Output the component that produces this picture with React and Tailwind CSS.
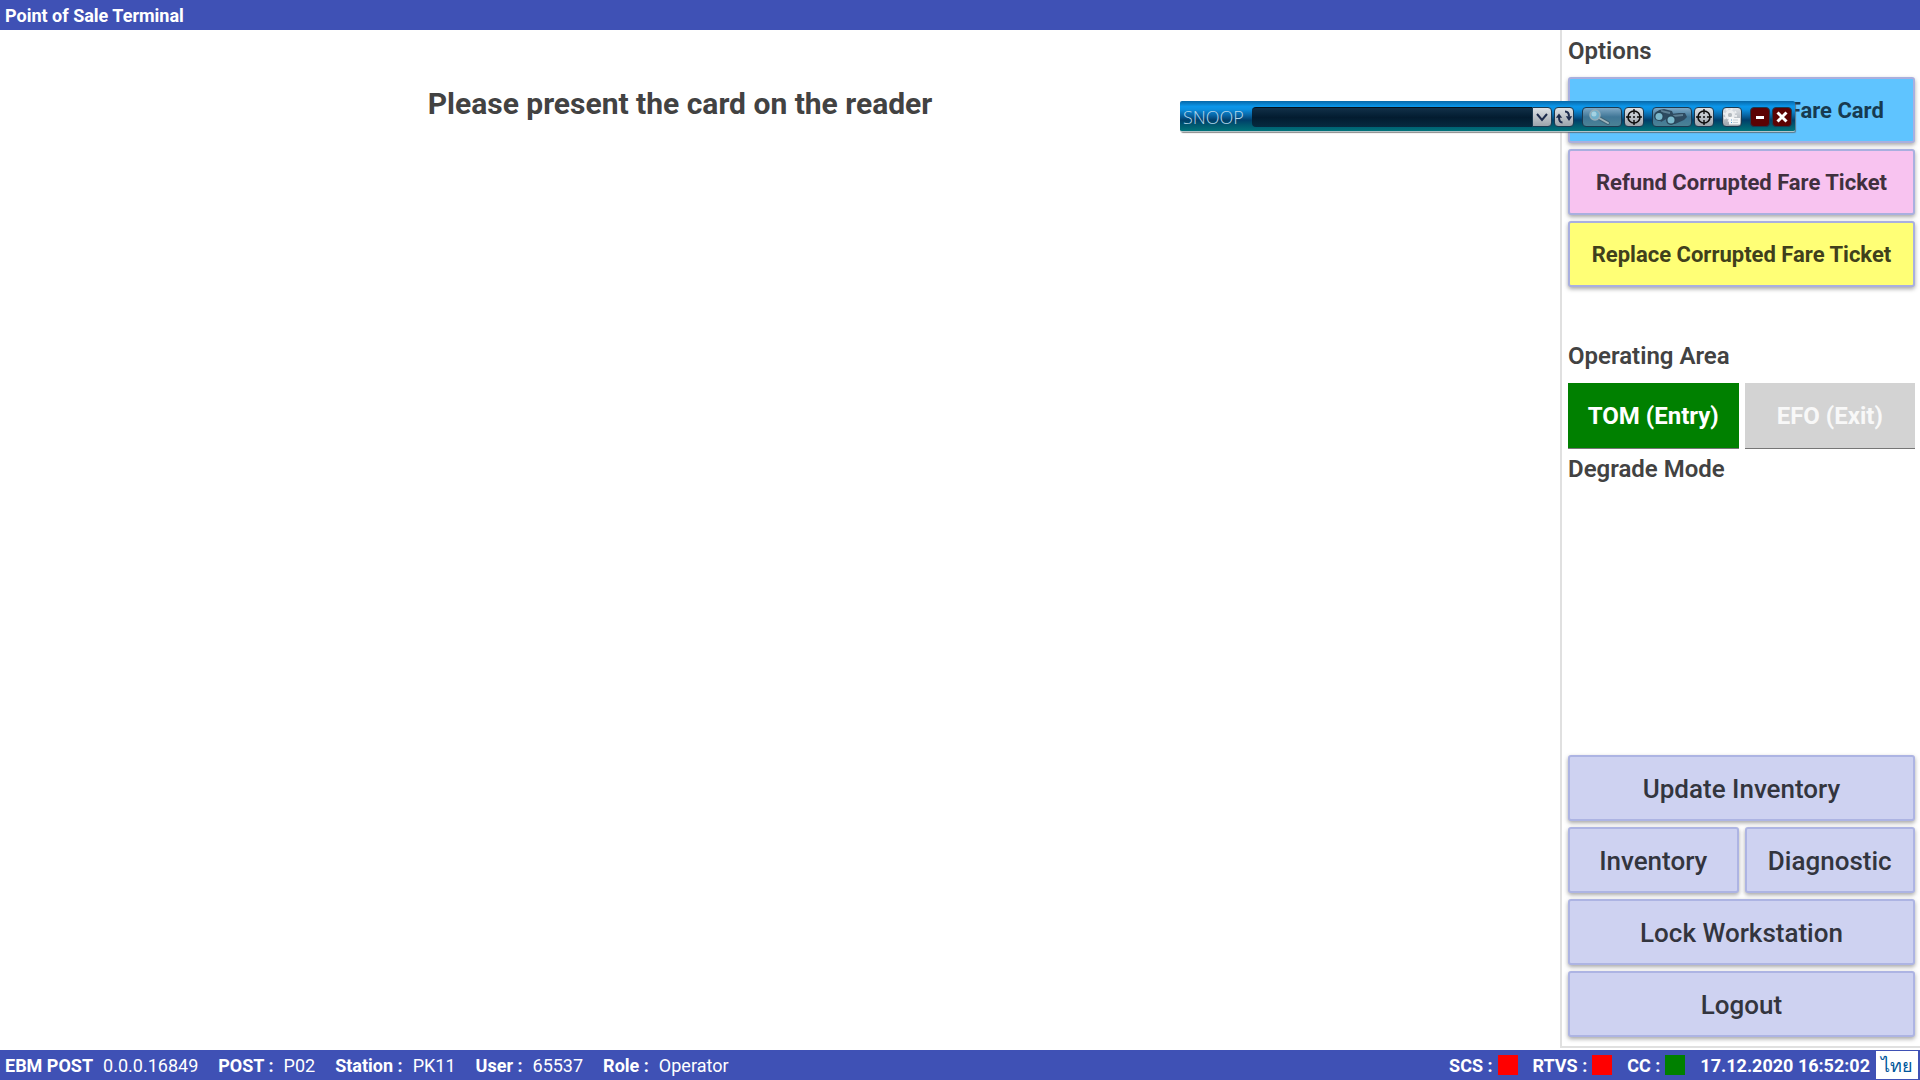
import React from "react";

const RAISED =
  "h-[66px] w-full rounded-[3px] border-2 text-center shadow-[0_2px_4px_rgba(0,0,0,0.35)]";

function OptionButton({ className, children }) {
  return (
    <button type="button" className={`${RAISED} border-[#a9afdf] text-[22px] font-bold whitespace-nowrap ${className}`}>
      {children}
    </button>
  );
}

function ActionButton({ className = "", children }) {
  return (
    <button
      type="button"
      className={`${RAISED} border-[#adb4e3] bg-[#ced2f1] pt-0.5 text-[26px] font-medium text-[#33353e] ${className}`}
    >
      {children}
    </button>
  );
}

function InfoItem({ label, value }) {
  return (
    <div className="flex gap-2.5">
      <dt className="font-bold">{label}</dt>
      <dd>{value}</dd>
    </div>
  );
}

function StatusItem({ label, color }) {
  return (
    <div className="flex items-center gap-[5px]">
      <span>{label} :</span>
      <span className={`size-5 ${color}`} />
    </div>
  );
}

const TOOL =
  "flex h-5 items-center justify-center rounded-[4px] border border-[#1c3a50] shrink-0";
const LIGHT = "w-5 bg-linear-to-b from-[#dde1e6] to-[#9da4ab]";
const WIDE = "w-10 bg-linear-to-b from-[#7fa9c6] via-[#3f7696] to-[#4b8295]";

function TargetIcon() {
  return (
    <svg viewBox="0 0 18 18" className="size-[18px]" fill="none" stroke="#0c0c0c">
      <circle cx="9" cy="9" r="6" strokeWidth="1.6" />
      <path d="M9 1v5M9 12v5M1 9h5M12 9h5" strokeWidth="1.4" />
      <circle cx="9" cy="9" r="1" fill="#0c0c0c" stroke="none" />
    </svg>
  );
}

function RefreshIcon() {
  return (
    <svg viewBox="0 0 18 18" className="size-[18px]" fill="none" stroke="#1d2b4d" strokeWidth="2">
      <path d="M7.500 14.500C5 14.500 4 12 4 9" />
      <path d="M0.800 9.800L4 5.500l3.200 4.300z" fill="#1d2b4d" stroke="none" />
      <path d="M10 3.500c3 0 4 2 4 5" />
      <path d="M10.800 8.300h6.400L14 13z" fill="#1d2b4d" stroke="none" />
    </svg>
  );
}

function MagnifierIcon() {
  return (
    <svg viewBox="0 0 38 18" className="h-[18px] w-[38px]">
      <path d="M16 10l9 5" stroke="#3e6478" strokeWidth="4" strokeLinecap="round" />
      <path d="M16 10l9 5" stroke="#9fb4ba" strokeWidth="2" strokeLinecap="round" />
      <circle cx="12" cy="7" r="5" fill="#6fb0cc" stroke="#93adb8" strokeWidth="1.6" />
      <circle cx="11" cy="6" r="2.500" fill="#a4d2e2" />
    </svg>
  );
}

function BinocularsIcon() {
  return (
    <svg viewBox="0 0 38 18" className="h-[18px] w-[38px]">
      <path d="M3 5l3-3 5-1 8 2 2 5-6 2-7 4z" fill="#2d4a60" />
      <path d="M14 9l4-3 8-1 6 0 2 4-3 3-9 4-5 0z" fill="#2d4a60" />
      <path d="M8 3l9 2M20 8l10-1" stroke="#5d7f93" strokeWidth="2" />
      <circle cx="6" cy="8" r="5" fill="#29475a" />
      <circle cx="6" cy="8.500" r="3.500" fill="#7bb8cb" />
      <circle cx="18" cy="12" r="5" fill="#29475a" />
      <circle cx="18" cy="12" r="3.500" fill="#7bb8cb" />
    </svg>
  );
}

function SettingsIcon() {
  return (
    <svg viewBox="0 0 18 18" className="size-[18px]">
      <circle cx="7" cy="7" r="3.500" fill="none" stroke="#eceef0" strokeWidth="3" />
      <circle cx="7" cy="7" r="6" fill="none" stroke="#eceef0" strokeWidth="2" strokeDasharray="2 2.700" />
      <circle cx="7" cy="7" r="2" fill="#b4babf" />
      <path d="M6 9h4l1 1h6v6.500H6z" fill="#f5f6f7" />
      <path d="M8 12h1M8 14.500h1" stroke="#5c9fd0" />
      <path d="M10 12h5M10 14.500h5" stroke="#c9d0d6" />
    </svg>
  );
}

function SnoopBar() {
  return (
    <div className="absolute top-[101px] right-[125px] flex h-[31px] w-[615px] items-center rounded-[2px] border-b border-[#b4c4c8] bg-[linear-gradient(to_bottom,#0768a8_0%,#0c96ea_18%,#0c90e0_28%,#075f9c_50%,#003f6a_64%,#00586f_80%,#00737a_100%)] shadow-[1px_1px_1px_rgba(90,90,90,0.7)]">
      <div className="flex w-full items-center px-[3px] pt-px">
        <label htmlFor="snoop" className="w-[69px] font-['Open_Sans',sans-serif] text-[18px] leading-5 font-light text-[#b4d6ea]">
          SNOOP
        </label>
        <input
          id="snoop"
          className="h-5 min-w-0 flex-1 rounded-l-[4px] border-t border-[#02101c] bg-linear-to-b from-[#123048] via-[#031c30] to-[#062a40] px-1 text-sm text-white outline-none"
        />
        <button type="button" aria-label="Show list" className={`${TOOL} ${LIGHT} rounded-l-none`}>
          <svg viewBox="0 0 18 18" className="size-[18px]" fill="none" stroke="#1d2b4d" strokeWidth="2">
            <path d="M4 6l5 6 5-6" />
          </svg>
        </button>
        <button type="button" aria-label="Refresh" className={`${TOOL} ${LIGHT} ml-[2px]`}>
          <RefreshIcon />
        </button>
        <button type="button" aria-label="Inspect" className={`${TOOL} ${WIDE} ml-2`}>
          <MagnifierIcon />
        </button>
        <button type="button" aria-label="Pick element" className={`${TOOL} ${LIGHT} ml-[2px]`}>
          <TargetIcon />
        </button>
        <button type="button" aria-label="Find" className={`${TOOL} ${WIDE} ml-2`}>
          <BinocularsIcon />
        </button>
        <button type="button" aria-label="Pick window" className={`${TOOL} ${LIGHT} ml-[2px]`}>
          <TargetIcon />
        </button>
        <button type="button" aria-label="Settings" className={`${TOOL} ${LIGHT} ml-2`}>
          <SettingsIcon />
        </button>
        <button type="button" aria-label="Minimize" className={`${TOOL} ml-2 w-5 bg-[#5c0203]`}>
          <svg viewBox="0 0 18 18" className="size-[18px]" stroke="#fff" strokeWidth="3">
            <path d="M5 9.500h8" />
          </svg>
        </button>
        <button type="button" aria-label="Close" className={`${TOOL} ml-[2px] w-5 bg-[#5c0203]`}>
          <svg viewBox="0 0 18 18" className="size-[18px]" stroke="#fff" strokeWidth="3">
            <path d="M4.500 4.500l9 9M13.500 4.500l-9 9" />
          </svg>
        </button>
      </div>
    </div>
  );
}

export default function App() {
  return (
    <div className="relative flex min-h-screen flex-col bg-white font-['Roboto',sans-serif] text-[#424242]">
      <header className="flex h-[30px] items-center bg-[#3f51b5] px-[5px] text-white">
        <h1 className="text-[18px] font-bold">Point of Sale Terminal</h1>
      </header>

      <div className="flex flex-1">
        <main className="flex-1 pt-[52px]">
          <p className="w-[1360px] max-w-full text-center text-[30px] leading-[44px] font-bold">
            Please present the card on the reader
          </p>
        </main>

        <aside className="mb-[2px] flex w-[360px] shrink-0 flex-col border-b-2 border-l-2 border-[#e0e0e0] pr-[5px] pb-[9px] pl-[6px]">
          <section>
            <h2 className="pt-[5px] text-[24px] leading-8 font-semibold">Options</h2>
            <div className="mt-2.5 flex flex-col gap-1.5">
              <OptionButton className="bg-[#5fc4ff] text-[#173a50]">Replace Corrupted Fare Card</OptionButton>
              <OptionButton className="bg-[#f8c3f0] text-[#40303e]">Refund Corrupted Fare Ticket</OptionButton>
              <OptionButton className="bg-[#ffff76] text-[#40401c]">Replace Corrupted Fare Ticket</OptionButton>
            </div>
          </section>

          <section className="mt-[53px]">
            <h2 className="text-[24px] leading-8 font-semibold">Operating Area</h2>
            <div className="mt-[11px] grid grid-cols-2 gap-1.5">
              <button type="button" className="h-[66px] border-b border-[#767676] bg-[#008000] text-[24px] font-bold text-white">
                TOM (Entry)
              </button>
              <button type="button" className="h-[66px] border-b border-[#767676] bg-[#d3d3d3] text-[24px] font-bold text-[#f8f8f8]">
                EFO (Exit)
              </button>
            </div>
          </section>

          <section className="mt-1">
            <h2 className="text-[24px] leading-8 font-semibold">Degrade Mode</h2>
          </section>

          <nav className="mt-auto grid grid-cols-2 gap-1.5">
            <ActionButton className="col-span-2">Update Inventory</ActionButton>
            <ActionButton>Inventory</ActionButton>
            <ActionButton>Diagnostic</ActionButton>
            <ActionButton className="col-span-2">Lock Workstation</ActionButton>
            <ActionButton className="col-span-2">Logout</ActionButton>
          </nav>
        </aside>
      </div>

      <footer className="flex h-[30px] items-center justify-between bg-[#3f51b5] pl-[5px] text-[18px] text-white">
        <dl className="flex gap-5">
          <InfoItem label="EBM POST" value="0.0.0.16849" />
          <InfoItem label="POST :" value="P02" />
          <InfoItem label="Station :" value="PK11" />
          <InfoItem label="User :" value="65537" />
          <InfoItem label="Role :" value="Operator" />
        </dl>
        <div className="flex items-center font-bold">
          <div className="flex gap-[15px]">
            <StatusItem label="SCS" color="bg-[#ff0000]" />
            <StatusItem label="RTVS" color="bg-[#ff0000]" />
            <StatusItem label="CC" color="bg-[#008000]" />
            <time dateTime="2020-12-17T16:52:02">17.12.2020 16:52:02</time>
          </div>
          <button
            type="button"
            lang="th"
            className="mr-[2px] ml-[6px] h-7 w-[42px] bg-white pt-0.5 text-[18px] leading-6 font-medium text-[#01579b]"
          >
            ไทย
          </button>
        </div>
      </footer>

      <SnoopBar />
    </div>
  );
}
